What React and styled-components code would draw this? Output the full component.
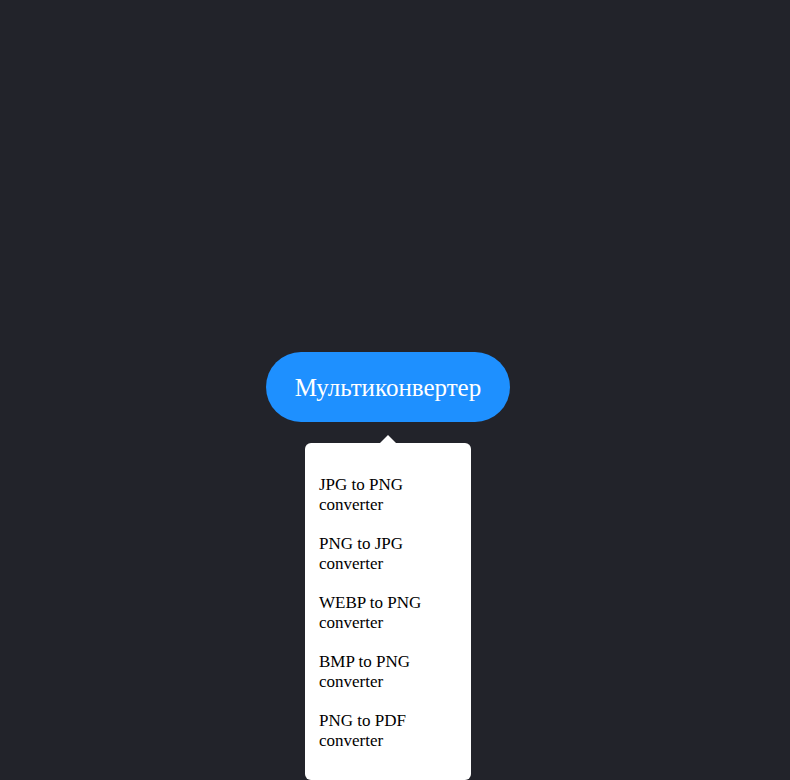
import React from "react";
import styled, { createGlobalStyle } from "styled-components";

const GlobalStyle = createGlobalStyle`
  html, body {
    margin: 0;
    padding: 0;
    background: #22232a;
    min-height: 100%;
  }
  body {
    font-family: "Liberation Serif", "Times New Roman", serif;
  }
`;

const Page = styled.div`
  width: 776px;
  min-height: 780px;
  padding-top: 352px;
  box-sizing: border-box;
  display: flex;
  flex-direction: column;
  align-items: center;
`;

const MainButton = styled.button`
  height: 70px;
  padding: 1px 29px 0;
  border: none;
  border-radius: 35px;
  background: #1e90ff;
  color: #ffffff;
  font-family: "Liberation Serif", "Times New Roman", serif;
  font-size: 25px;
  cursor: pointer;
`;

const Menu = styled.ul`
  position: relative;
  list-style: none;
  margin: 21px 0 0;
  width: 166px;
  box-sizing: border-box;
  padding: 32px 14px 30px;
  background: #ffffff;
  border-radius: 6px;
  display: flex;
  flex-direction: column;
  gap: 20px;

  &::before {
    content: "";
    position: absolute;
    top: -8px;
    left: 50%;
    margin-left: -8px;
    border-left: 8px solid transparent;
    border-right: 8px solid transparent;
    border-bottom: 8px solid #ffffff;
  }
`;

const Item = styled.li`
  font-size: 17px;
  line-height: 19.5px;
  color: #000000;
`;

const items = [
  "JPG to PNG converter",
  "PNG to JPG converter",
  "WEBP to PNG converter",
  "BMP to PNG converter",
  "PNG to PDF converter",
];

export default function App() {
  return (
    <>
      <GlobalStyle />
      <Page>
        <MainButton>Мультиконвертер</MainButton>
        <Menu>
          {items.map((t) => (
            <Item key={t}>{t}</Item>
          ))}
        </Menu>
      </Page>
    </>
  );
}
